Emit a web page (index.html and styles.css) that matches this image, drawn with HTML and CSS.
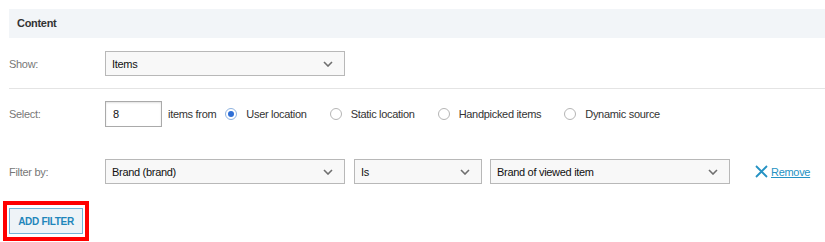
FILE: index.html
```html
<!DOCTYPE html>
<html>
<head>
<meta charset="utf-8">
<link rel="stylesheet" href="styles.css">
</head>
<body>
<div class="panel">
  <div class="header">Content</div>
  <div class="row row-show">
    <div class="label">Show:</div>
    <div class="select w-wide"><span>Items</span><svg class="chev" width="10" height="6" viewBox="0 0 10 6"><path d="M1 1 L5 5 L9 1" fill="none" stroke="#6f6f6f" stroke-width="1.6"/></svg></div>
  </div>
  <div class="divider"></div>
  <div class="row row-select">
    <div class="label">Select:</div>
    <div class="num">8</div>
    <span class="txt items-from">items from</span>
    <span class="radio checked"></span><span class="txt rlabel">User location</span>
    <span class="radio"></span><span class="txt rlabel">Static location</span>
    <span class="radio"></span><span class="txt rlabel">Handpicked items</span>
    <span class="radio"></span><span class="txt rlabel">Dynamic source</span>
  </div>
  <div class="row row-filter">
    <div class="label">Filter by:</div>
    <div class="select w-wide"><span>Brand (brand)</span><svg class="chev" width="10" height="6" viewBox="0 0 10 6"><path d="M1 1 L5 5 L9 1" fill="none" stroke="#6f6f6f" stroke-width="1.6"/></svg></div>
    <div class="select w-small"><span>Is</span><svg class="chev" width="10" height="6" viewBox="0 0 10 6"><path d="M1 1 L5 5 L9 1" fill="none" stroke="#6f6f6f" stroke-width="1.6"/></svg></div>
    <div class="select w-wide"><span>Brand of viewed item</span><svg class="chev" width="10" height="6" viewBox="0 0 10 6"><path d="M1 1 L5 5 L9 1" fill="none" stroke="#6f6f6f" stroke-width="1.6"/></svg></div>
    <a class="remove"><svg width="13" height="13" viewBox="0 0 13 13"><path d="M1 1 L12 12 M12 1 L1 12" stroke="#2592c3" stroke-width="1.8" fill="none"/></svg><span>Remove</span></a>
  </div>
  <div class="highlight">
    <button class="add">ADD FILTER</button>
  </div>
</div>
</body>
</html>
```
FILE: styles.css
```css
html, body {
  margin: 0;
  padding: 0;
  background: #ffffff;
  font-family: "Liberation Sans", Arial, sans-serif;
  font-size: 11px;
  letter-spacing: -0.3px;
  color: #222;
}
.panel {
  width: 825px;
  height: 242px;
  overflow: hidden;
}
.header {
  margin: 9px 0 0 9px;
  height: 29px;
  background: #f2f5f8;
  font-weight: bold;
  color: #333;
  padding-left: 8px;
  line-height: 28px;
  font-size: 11px;
}
.row {
  display: flex;
  align-items: center;
  margin-left: 9px;
}
.label {
  width: 96px;
  color: #777;
  font-size: 11px;
}
.row-show {
  margin-top: 13px;
}
.divider {
  margin: 12px 0 0 9px;
  height: 1px;
  background: #e4e4e4;
}
.row-select {
  margin-top: 12px;
}
.row-filter {
  margin-top: 32px;
}
.select {
  box-sizing: border-box;
  height: 25px;
  border: 1px solid #b8b8b8;
  background: #f8f8f8;
  display: flex;
  align-items: center;
  justify-content: space-between;
  padding: 0 11px 0 6px;
  color: #111;
  margin-right: 9px;
}
.w-wide { width: 240px; }
.w-small { width: 128px; margin-right: 8px; }
.chev { display: block; }
.num {
  box-sizing: border-box;
  width: 57px;
  height: 26px;
  border: 1px solid #aaa;
  box-shadow: inset 0 1px 2px rgba(0,0,0,0.12);
  padding-left: 7px;
  line-height: 24px;
  color: #111;
}
.txt { color: #333; }
.items-from {
  margin-left: 6px;
  margin-right: 9px;
}
.radio {
  box-sizing: border-box;
  width: 12px;
  height: 12px;
  border-radius: 50%;
  border: 1px solid #b5b5b5;
  background: #fff;
  margin-right: 9px;
  position: relative;
}
.radio.checked {
  border-color: #8fb3e0;
  background: #fff;
}
.radio.checked::after {
  content: "";
  position: absolute;
  left: 2px;
  top: 2px;
  width: 6px;
  height: 6px;
  border-radius: 50%;
  background: #2f6fd6;
}
.rlabel {
  margin-right: 23px;
}
.remove {
  display: flex;
  align-items: center;
  margin-left: 16px;
  color: #2592c3;
  text-decoration: underline;
  cursor: pointer;
}
.remove svg { margin-right: 3px; }
.highlight {
  display: inline-block;
  border: 4px solid #ff0000;
  padding: 3px 2px 3px 2px;
  margin: 17px 0 0 3px;
}
.add {
  display: block;
  box-sizing: border-box;
  width: 74px;
  height: 26px;
  border: 1px solid #74b3d6;
  background: #eef3f7;
  color: #1f86bb;
  font-family: "Liberation Sans", Arial, sans-serif;
  font-weight: bold;
  font-size: 10px;
  letter-spacing: -0.3px;
  padding: 0;
  margin: 0;
}
```
